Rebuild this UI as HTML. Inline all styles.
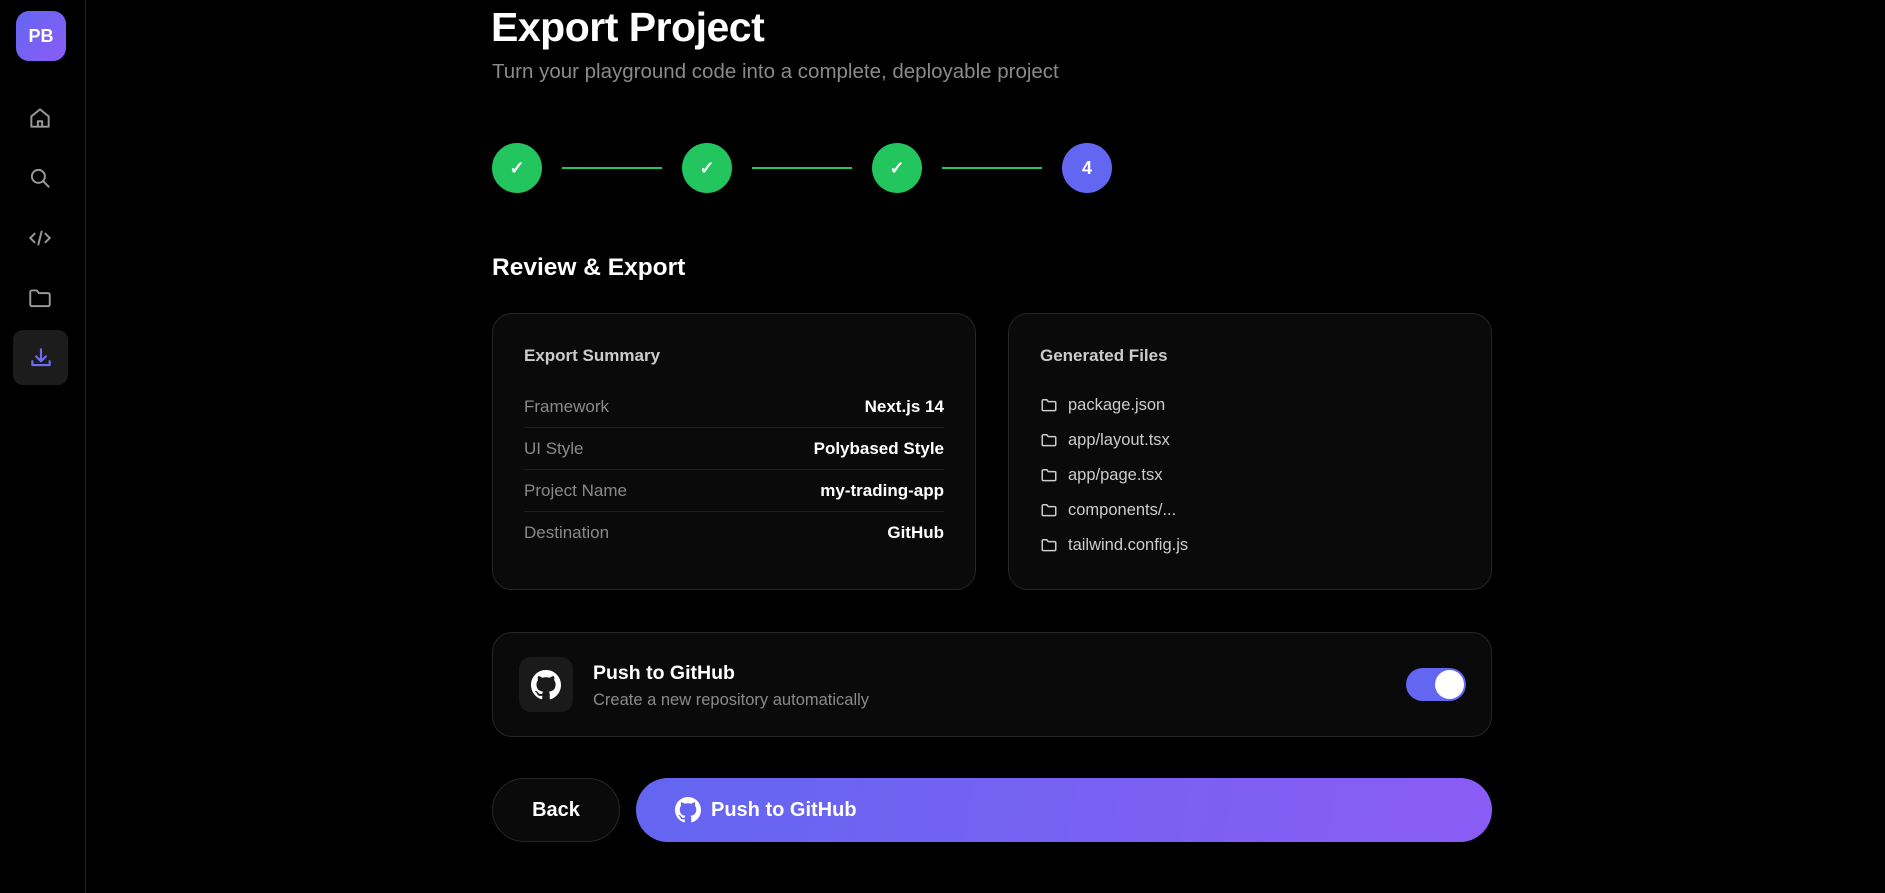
<!DOCTYPE html>
<html><head><meta charset="utf-8"><style>
*{box-sizing:border-box;margin:0;padding:0}
body{width:1885px;height:893px;background:#000;font-family:"Liberation Sans",sans-serif;color:#fff;position:relative;overflow:hidden}
.abs{position:absolute}
.side{left:0;top:0;width:86px;height:893px;border-right:1px solid #222}
.logo{left:16px;top:11px;width:50px;height:50px;border-radius:13px;background:linear-gradient(135deg,#6366f1,#8b5cf6);font-weight:bold;font-size:18px;display:flex;align-items:center;justify-content:center}
.ic{left:27px;width:26px;height:26px}
.card{background:#0a0a0a;border:1px solid #262626;border-radius:20px}
.row{position:absolute;left:31px;right:31px;height:42px;display:flex;justify-content:space-between;align-items:center;font-size:17px}
.row span:first-child{color:#8a8a8a}.row span:last-child{font-weight:bold}
.sep{border-bottom:1px solid #1f1f1f}
.f{position:absolute;left:31px;font-size:16.5px;color:#ccc;display:flex;align-items:center;gap:10px;height:20px}
.circ{top:143px;width:50px;height:50px;border-radius:50%;background:#22c55e;display:flex;align-items:center;justify-content:center;font-weight:bold;font-size:18px}
.line{top:167px;width:100px;height:2px;background:#22c55e}
</style></head><body>
<div class="abs side"></div>
<div class="abs logo">PB</div>
<svg class="abs ic" style="top:105px" viewBox="0 0 24 24" fill="none" stroke="#999" stroke-width="1.8" stroke-linejoin="round"><path d="M4 10.5L12 4l8 6.5V20H4z"/><path d="M10 20v-5h4v5"/></svg>
<svg class="abs ic" style="top:165px" viewBox="0 0 24 24" fill="none" stroke="#999" stroke-width="1.8" stroke-linecap="round"><circle cx="10.5" cy="10.5" r="6"/><path d="M15 15l5 5"/></svg>
<svg class="abs ic" style="top:225px" viewBox="0 0 24 24" fill="none" stroke="#999" stroke-width="1.8" stroke-linecap="round"><path d="M7 8l-4 4 4 4M17 8l4 4-4 4M13.5 6l-3 12"/></svg>
<svg class="abs ic" style="top:285px" viewBox="0 0 24 24" fill="none" stroke="#999" stroke-width="1.8" stroke-linejoin="round"><path d="M3 6.5a1.5 1.5 0 0 1 1.5-1.5H9l2 2.5h8.5A1.5 1.5 0 0 1 21 9v9a1.5 1.5 0 0 1-1.5 1.5h-15A1.5 1.5 0 0 1 3 18z"/></svg>
<div class="abs" style="left:13px;top:330px;width:55px;height:55px;border-radius:10px;background:#1c1c1c"></div>
<svg class="abs ic" style="top:345px;left:28px" viewBox="0 0 24 24" fill="none" stroke="#6d6cf5" stroke-width="2" stroke-linecap="round" stroke-linejoin="round"><path d="M12 4v11M7.5 10.5L12 15l4.5-4.5M4 15v3.5h16V15"/></svg>

<div class="abs" style="left:491px;top:4px;font-size:41px;font-weight:bold;letter-spacing:-0.5px">Export Project</div>
<div class="abs" style="left:492px;top:60px;font-size:20.5px;color:#8a8a8a">Turn your playground code into a complete, deployable project</div>

<div class="abs circ" style="left:492px">✓</div>
<div class="abs line" style="left:562px"></div>
<div class="abs circ" style="left:682px">✓</div>
<div class="abs line" style="left:752px"></div>
<div class="abs circ" style="left:872px">✓</div>
<div class="abs line" style="left:942px"></div>
<div class="abs circ" style="left:1062px;background:#6366f1">4</div>

<div class="abs" style="left:492px;top:254px;font-size:24.5px;font-weight:bold">Review &amp; Export</div>

<div class="abs card" style="left:492px;top:313px;width:484px;height:277px">
<div class="abs" style="left:31px;top:32px;font-size:17px;font-weight:bold;color:#ccc">Export Summary</div>
<div class="row sep" style="top:72px"><span>Framework</span><span>Next.js 14</span></div>
<div class="row sep" style="top:114px"><span>UI Style</span><span>Polybased Style</span></div>
<div class="row sep" style="top:156px"><span>Project Name</span><span>my-trading-app</span></div>
<div class="row" style="top:198px"><span>Destination</span><span>GitHub</span></div>
</div>
<div class="abs card" style="left:1008px;top:313px;width:484px;height:277px">
<div class="abs" style="left:31px;top:32px;font-size:17px;font-weight:bold;color:#ccc">Generated Files</div>
<div class="f" style="top:81px"><svg width="18" height="18" viewBox="0 0 24 24" fill="none" stroke="#ccc" stroke-width="2"><path d="M3 6.5a1.5 1.5 0 0 1 1.5-1.5H9l2 2.5h8.5A1.5 1.5 0 0 1 21 9v9a1.5 1.5 0 0 1-1.5 1.5h-15A1.5 1.5 0 0 1 3 18z"/></svg>package.json</div>
<div class="f" style="top:116px"><svg width="18" height="18" viewBox="0 0 24 24" fill="none" stroke="#ccc" stroke-width="2"><path d="M3 6.5a1.5 1.5 0 0 1 1.5-1.5H9l2 2.5h8.5A1.5 1.5 0 0 1 21 9v9a1.5 1.5 0 0 1-1.5 1.5h-15A1.5 1.5 0 0 1 3 18z"/></svg>app/layout.tsx</div>
<div class="f" style="top:151px"><svg width="18" height="18" viewBox="0 0 24 24" fill="none" stroke="#ccc" stroke-width="2"><path d="M3 6.5a1.5 1.5 0 0 1 1.5-1.5H9l2 2.5h8.5A1.5 1.5 0 0 1 21 9v9a1.5 1.5 0 0 1-1.5 1.5h-15A1.5 1.5 0 0 1 3 18z"/></svg>app/page.tsx</div>
<div class="f" style="top:186px"><svg width="18" height="18" viewBox="0 0 24 24" fill="none" stroke="#ccc" stroke-width="2"><path d="M3 6.5a1.5 1.5 0 0 1 1.5-1.5H9l2 2.5h8.5A1.5 1.5 0 0 1 21 9v9a1.5 1.5 0 0 1-1.5 1.5h-15A1.5 1.5 0 0 1 3 18z"/></svg>components/...</div>
<div class="f" style="top:221px"><svg width="18" height="18" viewBox="0 0 24 24" fill="none" stroke="#ccc" stroke-width="2"><path d="M3 6.5a1.5 1.5 0 0 1 1.5-1.5H9l2 2.5h8.5A1.5 1.5 0 0 1 21 9v9a1.5 1.5 0 0 1-1.5 1.5h-15A1.5 1.5 0 0 1 3 18z"/></svg>tailwind.config.js</div>
</div>

<div class="abs card" style="left:492px;top:632px;width:1000px;height:105px">
<div class="abs" style="left:26px;top:24px;width:54px;height:55px;border-radius:12px;background:#1a1a1a;display:flex;align-items:center;justify-content:center">
<svg width="30" height="30" viewBox="0 0 16 16" fill="#fff"><path d="M8 0C3.58 0 0 3.58 0 8c0 3.540 2.29 6.530 5.47 7.590.4.07.55-.17.55-.38 0-.19-.01-.82-.01-1.490-2.010.37-2.530-.49-2.690-.94-.09-.23-.48-.94-.82-1.130-.28-.15-.68-.52-.01-.53.63-.01 1.080.58 1.230.82.72 1.210 1.870.87 2.330.66.07-.52.28-.87.51-1.070-1.780-.2-3.640-.89-3.640-3.950 0-.87.31-1.590.82-2.150-.08-.2-.36-1.020.08-2.120 0 0 .67-.21 2.200.82.64-.18 1.320-.27 2-.27.68 0 1.360.09 2 .27 1.530-1.040 2.200-.82 2.200-.82.44 1.100.16 1.920.08 2.120.51.56.82 1.270.82 2.150 0 3.070-1.870 3.750-3.650 3.950.29.25.54.73.54 1.480 0 1.070-.01 1.930-.01 2.200 0 .21.15.46.55.38A8.013 8.013 0 0016 8c0-4.420-3.580-8-8-8z"/></svg></div>
<div class="abs" style="left:100px;top:29px;font-size:19.5px;font-weight:bold">Push to GitHub</div>
<div class="abs" style="left:100px;top:58px;font-size:16.5px;color:#8a8a8a">Create a new repository automatically</div>
<div class="abs" style="left:913px;top:35px;width:60px;height:33px;border-radius:17px;background:#6366f1"><div class="abs" style="right:2px;top:2px;width:29px;height:29px;border-radius:50%;background:#fff"></div></div>
</div>

<div class="abs" style="left:492px;top:778px;width:128px;height:64px;border-radius:32px;background:#0a0a0a;border:1px solid #262626;display:flex;align-items:center;justify-content:center;font-size:20px;font-weight:bold">Back</div>
<div class="abs" style="left:636px;top:778px;width:856px;height:64px;border-radius:32px;background:linear-gradient(100deg,#6366f1,#8b5cf6);display:flex;align-items:center;padding-left:39px;gap:10px;font-size:20px;font-weight:bold">
<svg width="26" height="26" viewBox="0 0 16 16" fill="#fff"><path d="M8 0C3.58 0 0 3.58 0 8c0 3.540 2.29 6.530 5.47 7.590.4.07.55-.17.55-.38 0-.19-.01-.82-.01-1.490-2.010.37-2.530-.49-2.690-.94-.09-.23-.48-.94-.82-1.130-.28-.15-.68-.52-.01-.53.63-.01 1.080.58 1.230.82.72 1.210 1.870.87 2.330.66.07-.52.28-.87.51-1.070-1.780-.2-3.640-.89-3.640-3.950 0-.87.31-1.590.82-2.150-.08-.2-.36-1.020.08-2.120 0 0 .67-.21 2.200.82.64-.18 1.320-.27 2-.27.68 0 1.360.09 2 .27 1.530-1.040 2.200-.82 2.200-.82.44 1.100.16 1.920.08 2.120.51.56.82 1.270.82 2.150 0 3.070-1.870 3.750-3.650 3.950.29.25.54.73.54 1.480 0 1.070-.01 1.930-.01 2.200 0 .21.15.46.55.38A8.013 8.013 0 0016 8c0-4.420-3.580-8-8-8z"/></svg>Push to GitHub</div>
</body></html>
